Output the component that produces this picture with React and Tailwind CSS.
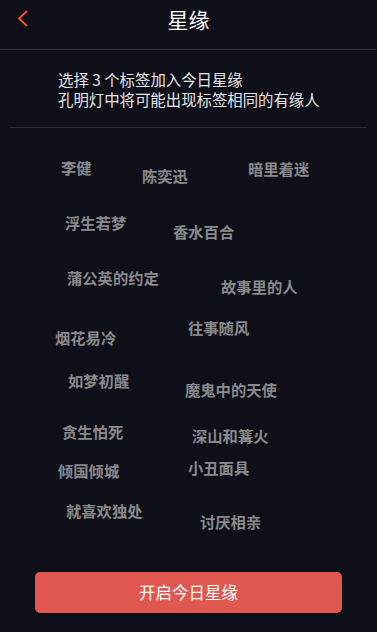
const tags = [
  { t: '李健', x: 61, y: 158 },
  { t: '陈奕迅', x: 142, y: 166 },
  { t: '暗里着迷', x: 248, y: 159 },
  { t: '浮生若梦', x: 65, y: 213 },
  { t: '香水百合', x: 173, y: 222 },
  { t: '蒲公英的约定', x: 67, y: 268 },
  { t: '故事里的人', x: 221, y: 277 },
  { t: '往事随风', x: 188, y: 318 },
  { t: '烟花易冷', x: 55, y: 328 },
  { t: '如梦初醒', x: 68, y: 371 },
  { t: '魔鬼中的天使', x: 185, y: 380 },
  { t: '贪生怕死', x: 62, y: 422 },
  { t: '深山和篝火', x: 192, y: 426 },
  { t: '倾国倾城', x: 58, y: 461 },
  { t: '小丑面具', x: 188, y: 458 },
  { t: '就喜欢独处', x: 66, y: 501 },
  { t: '讨厌相亲', x: 200, y: 512 },
];

export default function App() {
  return (
    <div
      className="w-[377px] h-[632px] bg-[#0f0f1a] flex flex-col overflow-hidden"
      style={{ fontFamily: '"Noto Sans CJK SC", "Liberation Sans", sans-serif' }}
    >
      <div className="relative h-[50px] flex items-center justify-center border-b border-[#2e2e3a] shrink-0">
        <svg className="absolute left-[16px] top-[9px]" width="14" height="19" viewBox="0 0 14 19">
          <path d="M11 2 L3 9.5 L11 17" fill="none" stroke="#f0522b" strokeWidth="2" />
        </svg>
        <span className="text-white text-[21px] leading-none -mt-[10px]">星缘</span>
      </div>
      <div className="pl-[48px] pt-[19px] pb-[18px] text-[#e6e6e6] text-[15.4px] leading-[20px] mx-[10px] border-b border-[#2e2e3a]">
        <div>选择 3 个标签加入今日星缘</div>
        <div>孔明灯中将可能出现标签相同的有缘人</div>
      </div>
      <div className="relative flex-1">
        {tags.map((g) => (
          <span
            key={g.t}
            className="absolute text-[15.3px] leading-[18px] font-bold text-[#8a8a8a] whitespace-nowrap"
            style={{ left: g.x, top: g.y - 128 }}
          >
            {g.t}
          </span>
        ))}
      </div>
      <div className="px-[35px] pb-[19px] shrink-0">
        <button className="w-full h-[41px] rounded-[5px] bg-[#df574f] text-white text-[16.5px]">
          开启今日星缘
        </button>
      </div>
    </div>
  );
}
